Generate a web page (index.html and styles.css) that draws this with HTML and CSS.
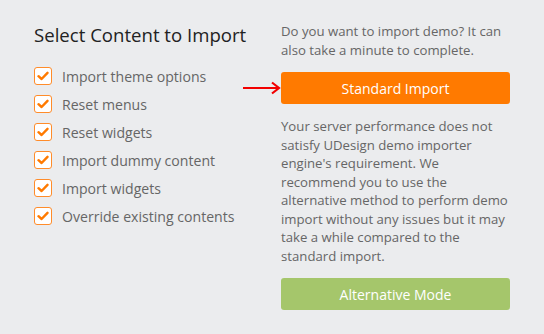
FILE: index.html
```html
<!doctype html>
<html>
    <head>
        <link rel="stylesheet" href="styles.css">
    </head>
    <body>
        <div class="importer">
            <div class="options">
                <h2 class="title">Select Content to Import</h2>
                <ul class="checklist">
                    <li><span class="box"><svg width="12" height="10" viewBox="0 0 12 10"><path d="M1.5 5.2 L4.6 8 L10.5 1.8" fill="none" stroke="#ff7a00" stroke-width="2.4" stroke-linecap="round" stroke-linejoin="round"/></svg></span>Import theme options</li>
                    <li><span class="box"><svg width="12" height="10" viewBox="0 0 12 10"><path d="M1.5 5.2 L4.6 8 L10.5 1.8" fill="none" stroke="#ff7a00" stroke-width="2.4" stroke-linecap="round" stroke-linejoin="round"/></svg></span>Reset menus</li>
                    <li><span class="box"><svg width="12" height="10" viewBox="0 0 12 10"><path d="M1.5 5.2 L4.6 8 L10.5 1.8" fill="none" stroke="#ff7a00" stroke-width="2.4" stroke-linecap="round" stroke-linejoin="round"/></svg></span>Reset widgets</li>
                    <li><span class="box"><svg width="12" height="10" viewBox="0 0 12 10"><path d="M1.5 5.2 L4.6 8 L10.5 1.8" fill="none" stroke="#ff7a00" stroke-width="2.4" stroke-linecap="round" stroke-linejoin="round"/></svg></span>Import dummy content</li>
                    <li><span class="box"><svg width="12" height="10" viewBox="0 0 12 10"><path d="M1.5 5.2 L4.6 8 L10.5 1.8" fill="none" stroke="#ff7a00" stroke-width="2.4" stroke-linecap="round" stroke-linejoin="round"/></svg></span>Import widgets</li>
                    <li><span class="box"><svg width="12" height="10" viewBox="0 0 12 10"><path d="M1.5 5.2 L4.6 8 L10.5 1.8" fill="none" stroke="#ff7a00" stroke-width="2.4" stroke-linecap="round" stroke-linejoin="round"/></svg></span>Override existing contents</li>
                </ul>
            </div>
            <div class="modes">
                <p class="note">Do you want to import demo? It can also take a minute to complete.</p>
                <div class="btn-wrap">
                    <svg class="pointer" width="40" height="14" viewBox="0 0 40 14"><path d="M1 7 H37 M30 1.5 L37 7 L30 12.5" fill="none" stroke="#f20000" stroke-width="2.2"/></svg>
                    <button class="btn btn-standard">Standard Import</button>
                </div>
                <p class="note warn">Your server performance does not satisfy UDesign demo importer engine's requirement. We recommend you to use the alternative method to perform demo import without any issues but it may take a while compared to the standard import.</p>
                <button class="btn btn-alt">Alternative Mode</button>
            </div>
        </div>
    </body>
</html>
```
FILE: styles.css
```css
body {
    margin: 0;
    background: #ebecee;
    font-family: "Open Sans", "DejaVu Sans", sans-serif;
    color: #666;
}
.importer {
    display: grid;
    grid-template-columns: 281px 229px;
    padding-top: 22px;
}
.options {
    padding-left: 34px;
}
.title {
    margin: 0 0 14px;
    font-size: 18.6px;
    font-weight: 500;
    color: #222;
    line-height: 26px;
}
.checklist {
    list-style: none;
    margin: 0;
    padding: 0;
}
.checklist li {
    display: flex;
    align-items: center;
    height: 28px;
    font-size: 14.1px;
}
.box {
    width: 16px;
    height: 16px;
    border: 1px solid #ff8c2a;
    border-radius: 3px;
    background: #fff;
    margin-right: 10px;
    display: flex;
    align-items: center;
    justify-content: center;
}
.modes {
    display: flex;
    flex-direction: column;
}
.note {
    margin: 0;
    font-size: 13.2px;
    line-height: 18.5px;
}
.warn {
    margin-top: 13px;
}
.btn-wrap {
    position: relative;
    margin-top: 13px;
}
.pointer {
    position: absolute;
    left: -39px;
    top: 9px;
}
.btn {
    display: block;
    width: 100%;
    height: 32px;
    border: 0;
    border-radius: 3px;
    color: #fff;
    font-family: inherit;
    font-size: 14px;
}
.btn-standard {
    background: #ff7a00;
}
.btn-alt {
    margin-top: 13px;
    background: #a5c66b;
}
```
